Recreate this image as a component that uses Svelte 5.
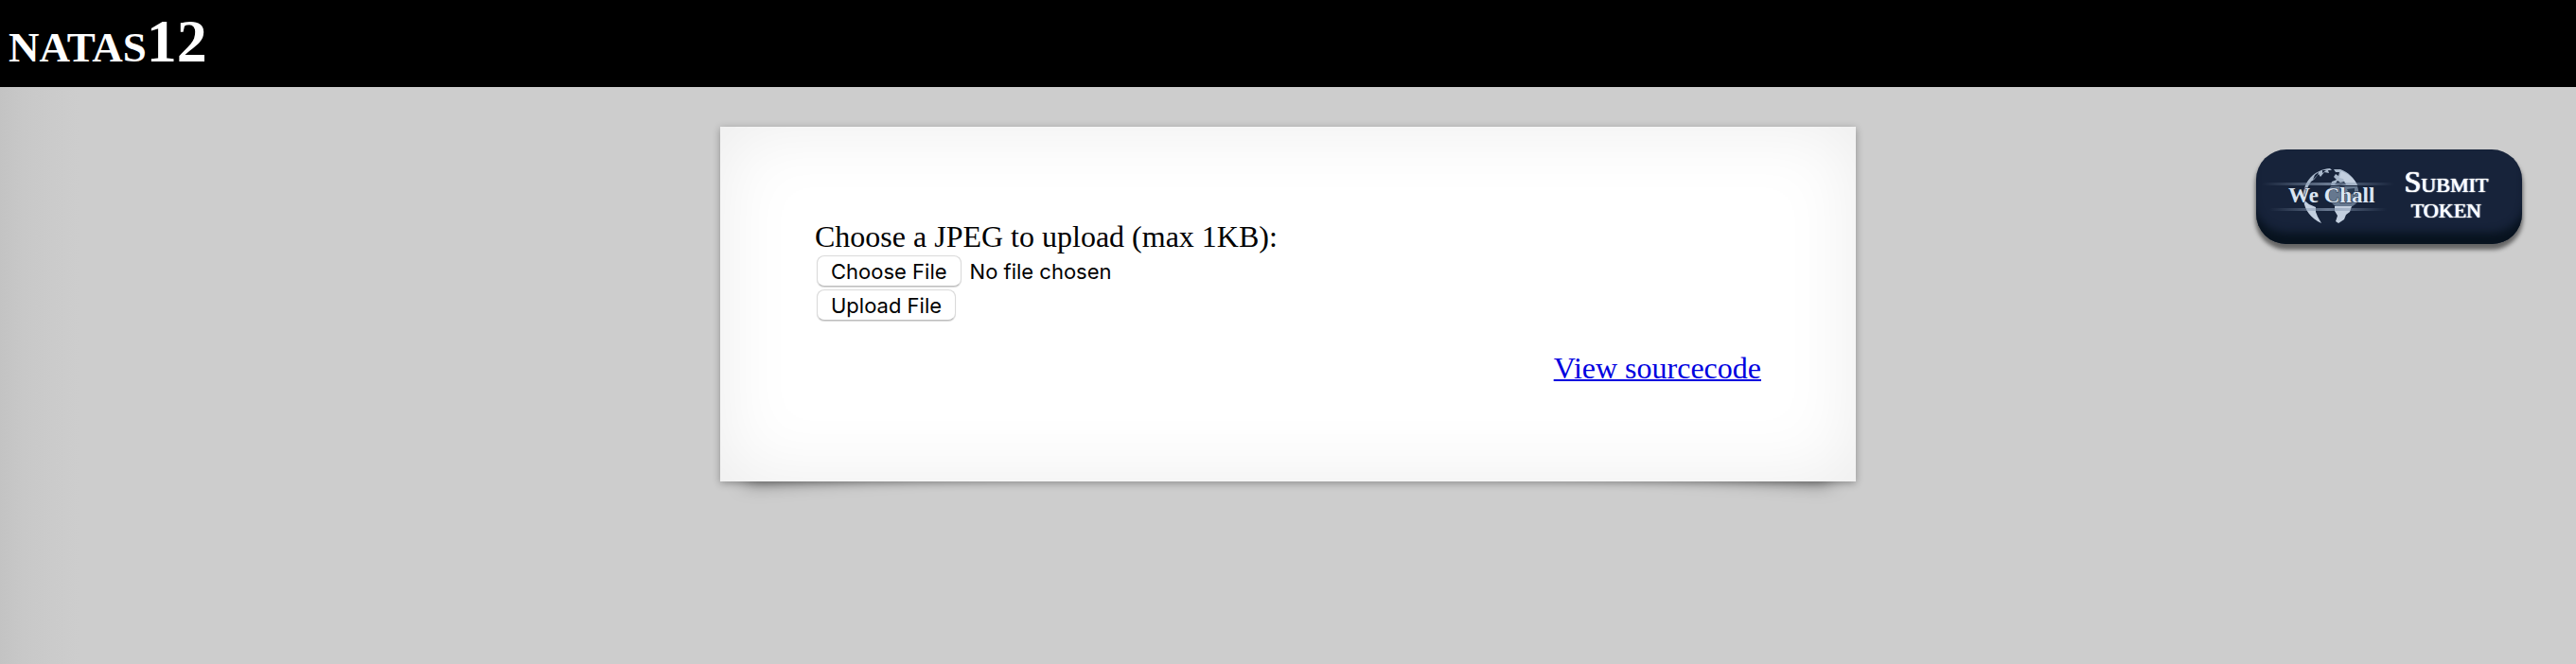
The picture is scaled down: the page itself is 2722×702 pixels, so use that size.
<script>
  const level = 12;
</script>

<div class="page">
  <header>
    <h1>natas{level}</h1>
  </header>

  <main>
    <section class="card">
      <form onsubmit={(e) => e.preventDefault()}>
        <label for="upload">Choose a JPEG to upload (max 1KB):</label>
        <input id="upload" type="file" accept="image/jpeg" />
        <button class="upload" type="submit">Upload File</button>
      </form>
      <a class="source" href="#source">View sourcecode</a>
    </section>

    <button class="wechall" type="button">
      <svg class="logo" viewBox="0 0 140 78" aria-hidden="true">
        <defs>
          <linearGradient id="streak" x1="0" x2="1">
            <stop offset="0" stop-color="#7f91aa" stop-opacity="0" />
            <stop offset="0.5" stop-color="#8c9db5" stop-opacity="0.7" />
            <stop offset="1" stop-color="#7f91aa" stop-opacity="0" />
          </linearGradient>
        </defs>
        <path fill="#a9b8cb" d="M44 41C43 24 56 11 72 10L74 12L70 12L71 15L66 14L62 19L60 16L55 22L52 24L49 29L47 36L46 43Z" />
        <path fill="#15223a" d="M56 17L60 14L59 17L54 22ZM64 12L68 12L64 15Z" />
        <path fill="#c3cfdf" d="M44 43L50 48L57 51L57 56L59 61L63 68C52 63 45 54 44 43Z" />
        <path fill="#a9b8cb" d="M76 11L83 11C91 14 98 20 101 28L73 28L74 24L79 22L76 19L78 16L81 18L82 14L78 14Z" />
        <path fill="#c3cfdf" d="M84 13C92 16 98 21 101 28L89 27L86 21L82 20Z" />
        <path fill="#15223a" d="M77 27L80 23L83 25L87 24L89 27L83 28Z" />
        <path fill="#66788f" d="M73 29L101 29C103 35 103 41 100 47L93 52L79 51L73 46L70 40L70 33Z" />
        <path fill="#263850" d="M90 32L98 31L98 36L93 38ZM82 31L88 33L83 35Z" />
        <path fill="#c3cfdf" d="M77 50L95 50L93 56L89 59L87 64L81 68L78 66L80 60L77 55Z" />
        <rect x="0" y="25" width="140" height="3" fill="url(#streak)" />
        <rect x="8" y="52" width="124" height="3" fill="url(#streak)" />
        <text x="28" y="46">We Chall</text>
      </svg>
      <span class="submit">
        <span class="first">Submit</span>
        <span class="second">token</span>
      </span>
    </button>
  </main>
</div>

<style>
  :global(body) {
    background: #cdcdcd;
  }

  .page {
    min-height: 100vh;
    background: linear-gradient(to right, #c3c3c3, #c8c8c8 24px, #cbcbcb 56px, #cdcdcd 84px);
    color: #000;
    font-family: "Liberation Serif", "Times New Roman", serif;
    font-size: 32px;
    line-height: 36px;
  }

  header {
    background: #000;
    padding: 8px 9px 12px;
  }

  h1 {
    margin: 0;
    color: #fff;
    font-size: 64px;
    line-height: 72px;
    font-variant: small-caps;
  }

  main {
    position: relative;
    z-index: 0;
    display: grid;
    grid-template-columns: minmax(0, 1fr) minmax(0, 1200px) minmax(0, 1fr);
    align-items: start;
    padding-top: 42px;
  }

  .card {
    grid-column: 2;
    position: relative;
    box-sizing: border-box;
    display: flex;
    flex-direction: column;
    gap: 32px;
    padding: 98px 100px 102px;
    background: #fff;
    box-shadow:
      0 2px 8px rgba(0, 0, 0, 0.3),
      0 0 80px rgba(0, 0, 0, 0.08) inset;
  }

  .card::before,
  .card::after {
    content: "";
    position: absolute;
    z-index: -1;
    bottom: 34px;
    left: 24px;
    width: 45%;
    height: 20%;
    box-shadow: 0 16px 20px rgba(0, 0, 0, 0.55);
    transform: rotate(-4deg);
  }

  .card::after {
    left: auto;
    right: 24px;
    transform: rotate(4deg);
  }

  form {
    display: flex;
    flex-direction: column;
    align-items: flex-start;
  }

  input,
  .upload {
    color: #000;
    font-family: Inter, sans-serif;
    font-size: 22px;
    line-height: 32px;
  }

  input {
    height: 36px;
    margin: 2px 0 0;
    padding: 0 2px;
  }

  input::file-selector-button,
  .upload {
    box-sizing: border-box;
    height: 33px;
    padding: 0 14px;
    border: 1px solid #dadada;
    border-bottom-color: #bdbdbd;
    border-radius: 8px;
    background: #fff;
    box-shadow: 0 1px 1px rgba(0, 0, 0, 0.15);
    font: inherit;
  }

  input::file-selector-button {
    margin: 0 9px 0 0;
  }

  .upload {
    margin: 0 2px;
    font-family: Inter, sans-serif;
    font-size: 22px;
    line-height: 30px;
  }

  .source {
    align-self: flex-end;
    color: #0000e0;
    text-decoration-thickness: 2px;
  }

  .wechall {
    grid-column: 3;
    justify-self: end;
    display: flex;
    align-items: center;
    gap: 10px;
    margin: 24px 57px 0 0;
    padding: 10px 36px 12px 6px;
    border: 0;
    border-radius: 32px;
    background: #17233a;
    box-shadow:
      0 -16px 8px -4px #08131f inset,
      0 5px 4px 1px rgba(0, 0, 0, 0.5);
    color: #fff;
    font-family: inherit;
    font-size: 32px;
  }

  .logo {
    width: 140px;
    height: 78px;
  }

  .logo text {
    fill: #dbe5f2;
    stroke: #17233a;
    stroke-width: 1px;
    paint-order: stroke;
    font-size: 23px;
    font-weight: bold;
  }

  .submit {
    display: flex;
    flex-direction: column;
    align-items: center;
    text-shadow: 0 0 1px #fff, 1px 0 1px #fff;
  }

  .first {
    font-variant: small-caps;
    line-height: 32px;
  }

  .second {
    font-size: 22px;
    line-height: 30px;
    text-transform: uppercase;
  }
</style>
